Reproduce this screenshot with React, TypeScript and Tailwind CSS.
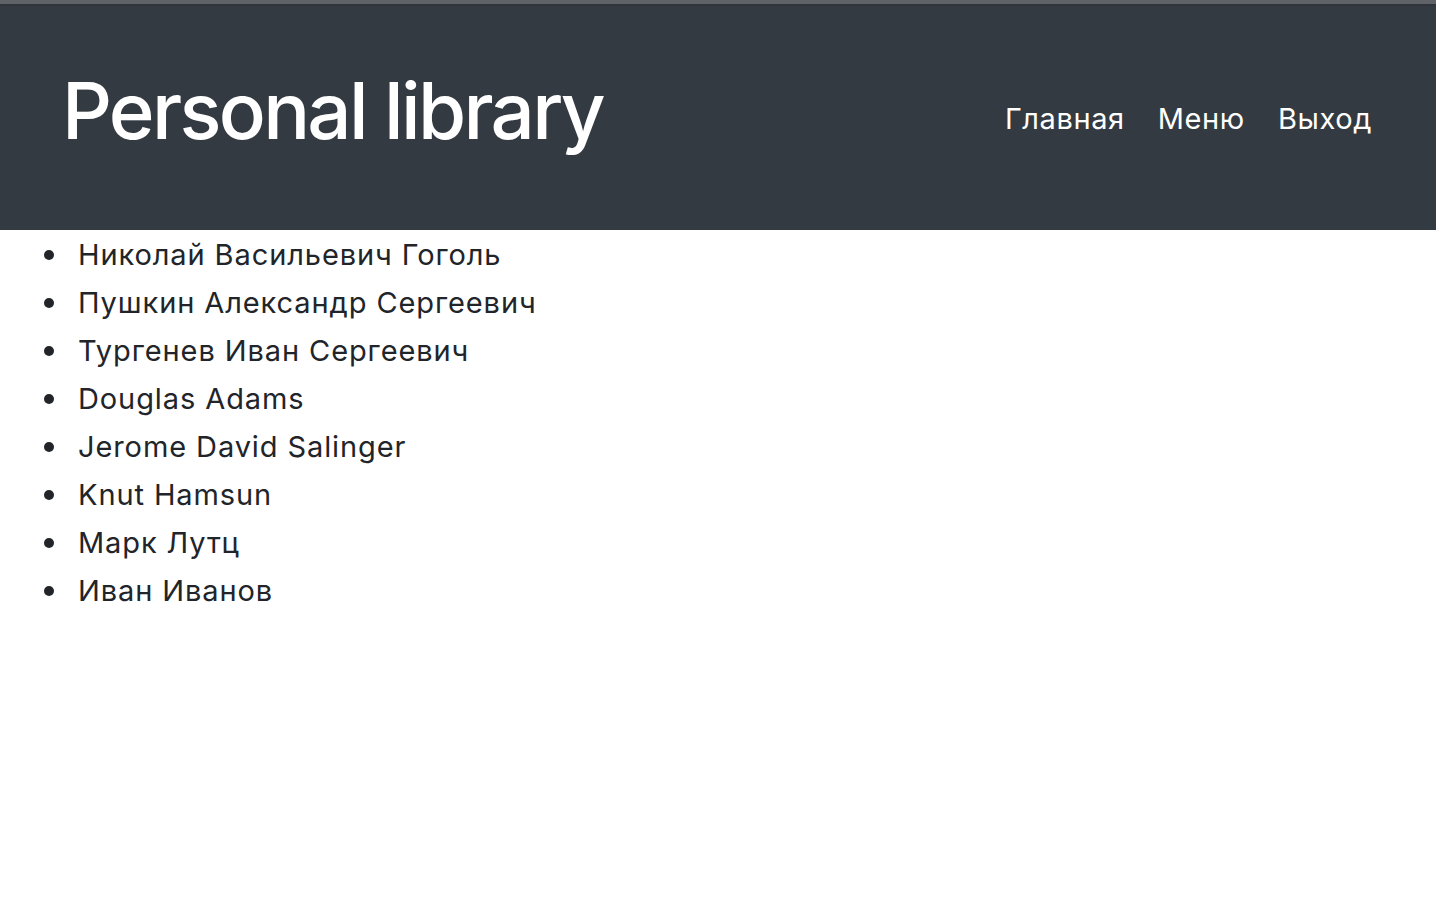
const authors = [
  'Николай Васильевич Гоголь',
  'Пушкин Александр Сергеевич',
  'Тургенев Иван Сергеевич',
  'Douglas Adams',
  'Jerome David Salinger',
  'Knut Hamsun',
  'Марк Лутц',
  'Иван Иванов',
];

export default function App() {
  return (
    <div className="min-h-screen bg-white font-['Inter',sans-serif] text-[#212529]">
      <div className="h-[4px] bg-[#5f6368]" />
      <div className="h-[2px] bg-[#2f343b]" />
      <header className="flex h-[224px] items-center justify-between bg-[#343a41] pl-[62px] pr-[64px] text-white">
        <h1 className="text-[78px] font-medium tracking-[-2.7px] leading-none pb-[14px]">Personal library</h1>
        <nav className="flex gap-[33px] pt-[2px] text-[29px] tracking-[0.6px]">
          <a href="#">Главная</a>
          <a href="#">Меню</a>
          <a href="#">Выход</a>
        </nav>
      </header>
      <ul className="pl-[44px] pt-[1px] text-[29px] leading-[48px] tracking-[0.9px]">
        {authors.map((a) => (
          <li key={a} className="flex items-center">
            <span className="mr-[24px] h-[10px] w-[10px] shrink-0 rounded-full bg-[#212529]" />
            {a}
          </li>
        ))}
      </ul>
    </div>
  );
}
